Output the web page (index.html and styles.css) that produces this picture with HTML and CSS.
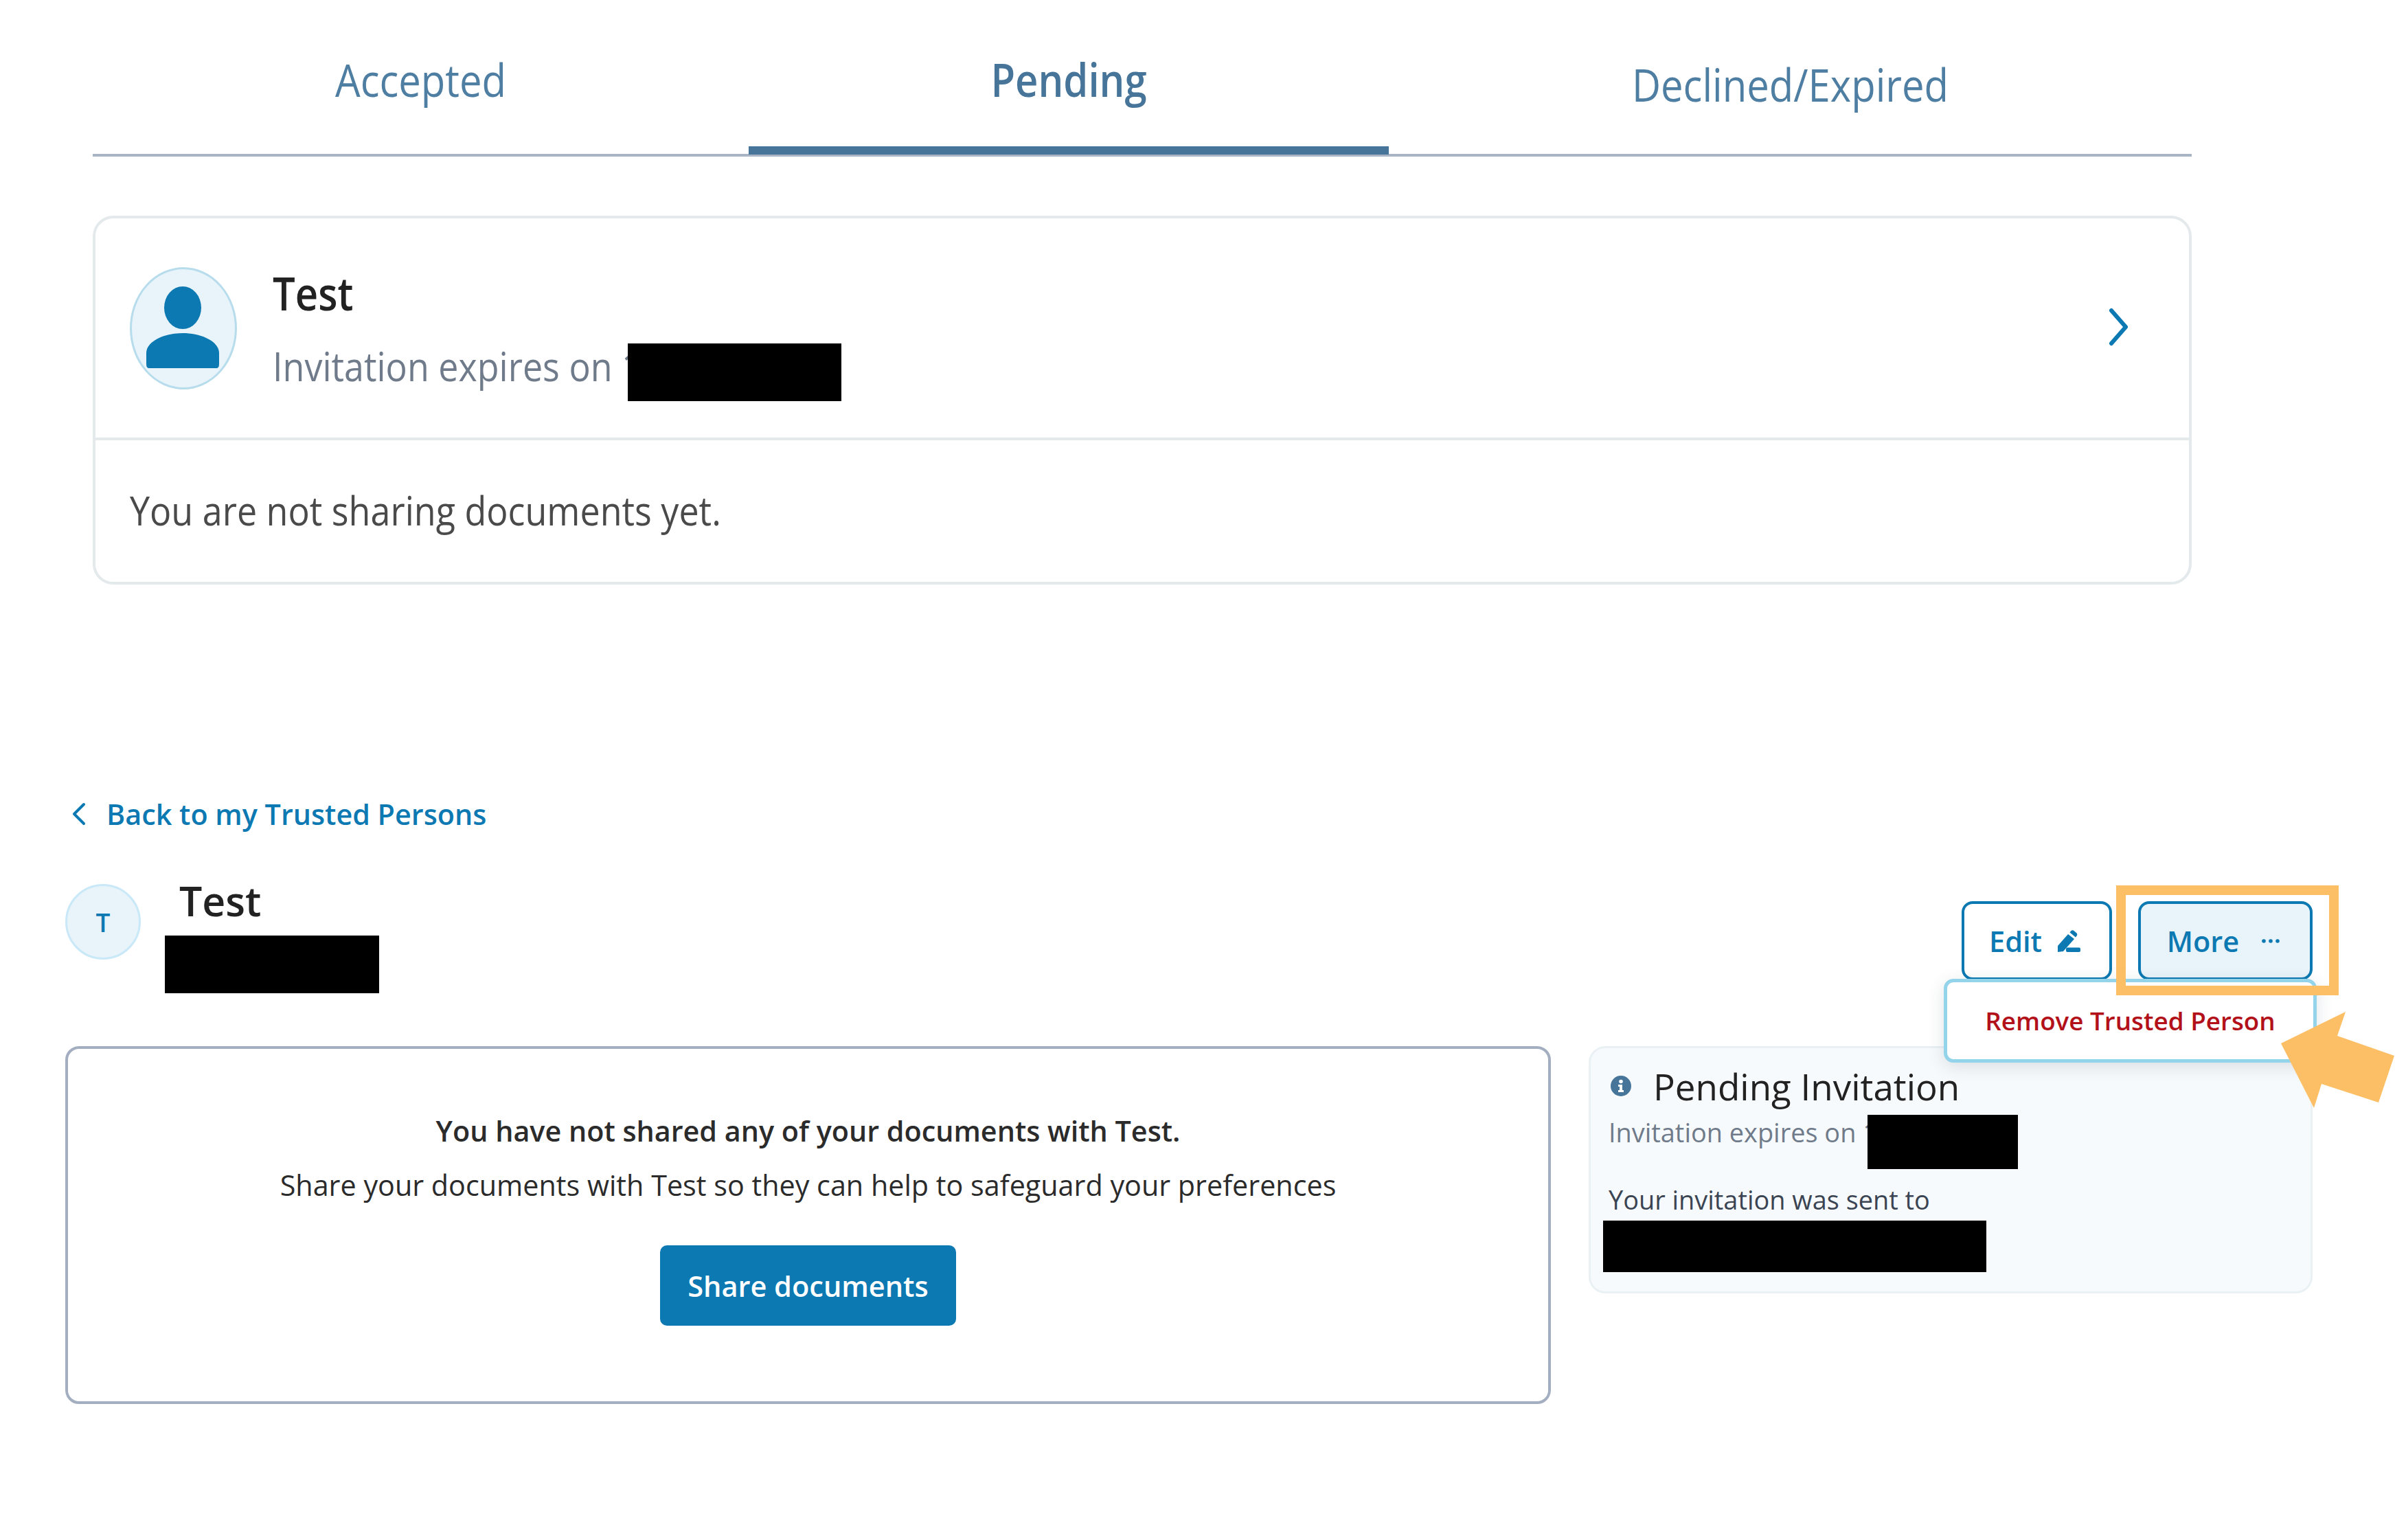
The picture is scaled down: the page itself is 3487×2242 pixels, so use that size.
FILE: index.html
```html
<!DOCTYPE html>
<html lang="en">
<head>
<meta charset="utf-8">
<title>Trusted Persons</title>
<link rel="stylesheet" href="styles.css">
</head>
<body>
<div class="page">
  <section class="top">
    <nav class="tabs">
      <div class="tab"><span class="tall">Accepted</span></div>
      <div class="tab tab-active"><span class="tall">Pending</span></div>
      <div class="tab tab-low"><span class="tall">Declined/Expired</span></div>
    </nav>
    <article class="card">
      <div class="card-head">
        <svg class="avatar-big" viewBox="0 0 156 178" aria-hidden="true">
          <ellipse cx="78" cy="89" rx="76.5" ry="87.5" fill="#e8f3fa" stroke="#b7dcec" stroke-width="3"/>
          <ellipse cx="77" cy="59" rx="27" ry="31" fill="#0c79b2"/>
          <path d="M28 147Q24 147 24 141V125C24 108 50 96 77 96C104 96 130 108 130 125V141Q130 147 126 147Z" fill="#0c79b2"/>
        </svg>
        <div class="card-who">
          <div class="card-name"><span class="tall">Test</span></div>
          <div class="card-exp"><span class="tall">Invitation expires on 1</span></div>
        </div>
        <svg class="chev-right" viewBox="0 0 28 56" aria-hidden="true"><path d="M4 4L25 28L4 52" fill="none" stroke="#0c79b2" stroke-width="6" stroke-linecap="round" stroke-linejoin="round"/></svg>
        <div class="redact r-card"></div>
      </div>
      <div class="card-foot"><span class="tall">You are not sharing documents yet.</span></div>
    </article>
  </section>

  <section class="detail">
    <a class="back">
      <svg class="chev-left" viewBox="0 0 20 34" aria-hidden="true"><path d="M17 3L3 17L17 31" fill="none" stroke="#0c79b2" stroke-width="4" stroke-linecap="round" stroke-linejoin="round"/></svg>
      <span>Back to my Trusted Persons</span>
    </a>
    <header class="head">
      <div class="who">
        <div class="avatar-t">T</div>
        <div class="who-name">Test</div>
        <div class="redact r-name"></div>
      </div>
      <div class="actions">
        <button class="btn">Edit
          <svg class="pen" viewBox="0 0 34 32" aria-hidden="true"><path d="M1 23L16 6L25 13L9 31L1 32Z" fill="#0c79b2"/><path d="M18.500 3.500L20.500 1Q22.500 -.5 24.500 1L28.500 4.500Q30 6.500 28.500 8.500L27 10.500Z" fill="#0c79b2"/><rect x="13" y="25.500" width="21" height="6.500" rx="2" fill="#0c79b2"/></svg>
        </button>
        <button class="btn btn-on">More
          <svg class="dots" viewBox="0 0 26 6" aria-hidden="true"><circle cx="3" cy="3" r="2.8" fill="#0c79b2"/><circle cx="13" cy="3" r="2.8" fill="#0c79b2"/><circle cx="23" cy="3" r="2.8" fill="#0c79b2"/></svg>
        </button>
        <div class="menu">Remove Trusted Person</div>
        <div class="mark-box"></div>
        <svg class="mark-arrow" viewBox="0 0 166 141" aria-hidden="true"><polygon points="94,0 82,35 165,64 142,132 59,105 48,140 0,46" fill="#fdbf66"/></svg>
      </div>
    </header>
    <div class="content">
      <main class="panel">
        <p class="panel-strong">You have not shared any of your documents with Test.</p>
        <p class="panel-text">Share your documents with Test so they can help to safeguard your preferences</p>
        <button class="btn-primary">Share documents</button>
      </main>
      <aside class="side">
        <div class="side-title">
          <svg class="info" viewBox="0 0 30 30" aria-hidden="true"><circle cx="15" cy="15" r="15" fill="#47759a"/><circle cx="15" cy="8.5" r="2.8" fill="#fff"/><path d="M11 13H17V21H19V24H11V21H13V16H11Z" fill="#fff"/></svg>
          <span>Pending Invitation</span>
        </div>
        <div class="side-exp">Invitation expires on 1</div>
        <div class="side-sent">Your invitation was sent to</div>
        <div class="redact r-side1"></div>
        <div class="redact r-side2"></div>
      </aside>
    </div>
  </section>
</div>
</body>
</html>
```
FILE: styles.css
```css
* { box-sizing: border-box; }
html, body { margin: 0; padding: 0; background: #fff; }
body { font-family: "Open Sans", "Noto Sans", sans-serif; color: #2b2b2b; }
.page { width: 3487px; height: 2242px; overflow: hidden; position: relative; }
.tall { display: inline-block; transform: scaleY(1.14); white-space: nowrap; }
.redact { position: absolute; background: #000; }

.top { margin-left: 135px; width: 3056px; }
.tabs { display: grid; grid-template-columns: 955px 932px 1169px; height: 228px; border-bottom: 4px solid #a9b4c5; }
.tab { display: flex; justify-content: center; font-size: 58px; line-height: 80px; color: #4f7ea3; padding-top: 80px; height: 224px; }
.tab-active { font-weight: 600; color: #47759a; border-bottom: 12px solid #47759a; height: 225px; }
.tab-low { padding-top: 87px; }

.card { margin-top: 86px; height: 537px; border: 4px solid #e4e9ec; border-radius: 30px; }
.card-head { position: relative; height: 323px; display: flex; align-items: center; padding: 0 89px 0 50px; border-bottom: 4px solid #e4e9ec; }
.avatar-big { width: 156px; height: 178px; flex: none; }
.card-who { margin-left: 52px; padding-top: 3px; flex: 1; }
.card-name { font-size: 58px; line-height: 105px; font-weight: 600; color: #222; }
.card-exp { font-size: 52px; line-height: 105px; color: #6f7b8a; }
.chev-right { width: 28px; height: 56px; flex: none; margin-bottom: 3px; }
.r-card { left: 775px; top: 182px; width: 311px; height: 84px; }
.card-foot { height: 206px; display: flex; align-items: center; padding-left: 50px; font-size: 52px; color: #4a4a4a; padding-bottom: 5px; }

.detail { margin: 304px 120px 0 95px; }
.back { display: flex; align-items: center; height: 60px; color: #0c79b2; font-size: 41.3px; font-weight: 600; padding-left: 10px; }
.chev-left { width: 20px; height: 34px; margin-right: 30px; }
.head { display: flex; justify-content: space-between; height: 236px; margin-top: 72px; }
.who { position: relative; display: flex; align-items: flex-start; }
.avatar-t { width: 110px; height: 110px; border-radius: 50%; background: #e8f3fa; border: 3px solid #c9e8f8; color: #0c79b2; font-size: 37px; font-weight: 600; display: flex; align-items: center; justify-content: center; }
.who-name { margin: -16px 0 0 56px; font-size: 59px; line-height: 80px; font-weight: 600; color: #222; }
.r-name { left: 145px; top: 75px; width: 312px; height: 84px; }
.actions { position: relative; z-index: 2; display: flex; gap: 38px; margin-top: 25px; align-items: flex-start; }
.btn { font: 600 41.5px "Open Sans", sans-serif; color: #0c79b2; background: #fff; border: 4px solid #0c79b2; border-radius: 16px; height: 115px; width: 219px; padding: 0 6px 0 0; display: flex; align-items: center; justify-content: center; gap: 22px; }
.btn-on { width: 254px; background: #e8f3fa; gap: 33px; padding-right: 6px; }
.pen { width: 34px; height: 32px; }
.dots { width: 26px; height: 6px; }
.menu { position: absolute; left: -26px; top: 113px; width: 543px; height: 122px; background: #fff; border: 5px solid #94d4ea; border-radius: 14px; box-shadow: 0 6px 24px rgba(40, 60, 80, .14); color: #b3111a; font-size: 36.8px; font-weight: 600; display: flex; align-items: center; justify-content: center; }
.mark-box { position: absolute; left: 225px; top: -23px; width: 324px; height: 160px; border: 14px solid #fdbf66; }
.mark-arrow { position: absolute; left: 465px; top: 161px; width: 166px; height: 141px; overflow: visible; }

.content { display: flex; gap: 55px; align-items: flex-start; }
.panel { width: 2163px; height: 521px; border: 4px solid #a3aec0; border-radius: 20px; text-align: center; padding-top: 84px; }
.panel p { margin: 0; font-size: 41.3px; line-height: 70px; color: #2b2b2b; }
.panel-strong { font-weight: 600; }
.panel-text { margin-top: 9px !important; }
.btn-primary { display: block; margin: 53px auto 0; width: 431px; height: 117px; border: 0; border-radius: 10px; background: #0c79b2; color: #fff; font: 600 41.5px "Open Sans", sans-serif; }
.side { position: relative; width: 1054px; height: 360px; background: #f7fafc; border: 3px solid #eaf1f5; border-radius: 24px; padding: 20px 0 0 26px; }
.side-title { display: flex; align-items: center; gap: 32px; height: 70px; padding-left: 3px; font-size: 52.9px; font-weight: 500; color: #222; }
.info { width: 30px; height: 30px; flex: none; }
.side-exp { margin-top: 7px; font-size: 37.9px; line-height: 50px; color: #6f7b8a; }
.side-sent { margin-top: 48px; font-size: 37.9px; line-height: 50px; color: #3a4452; }
.r-side1 { left: 403px; top: 97px; width: 219px; height: 79px; }
.r-side2 { left: 18px; top: 251px; width: 558px; height: 75px; }
```
